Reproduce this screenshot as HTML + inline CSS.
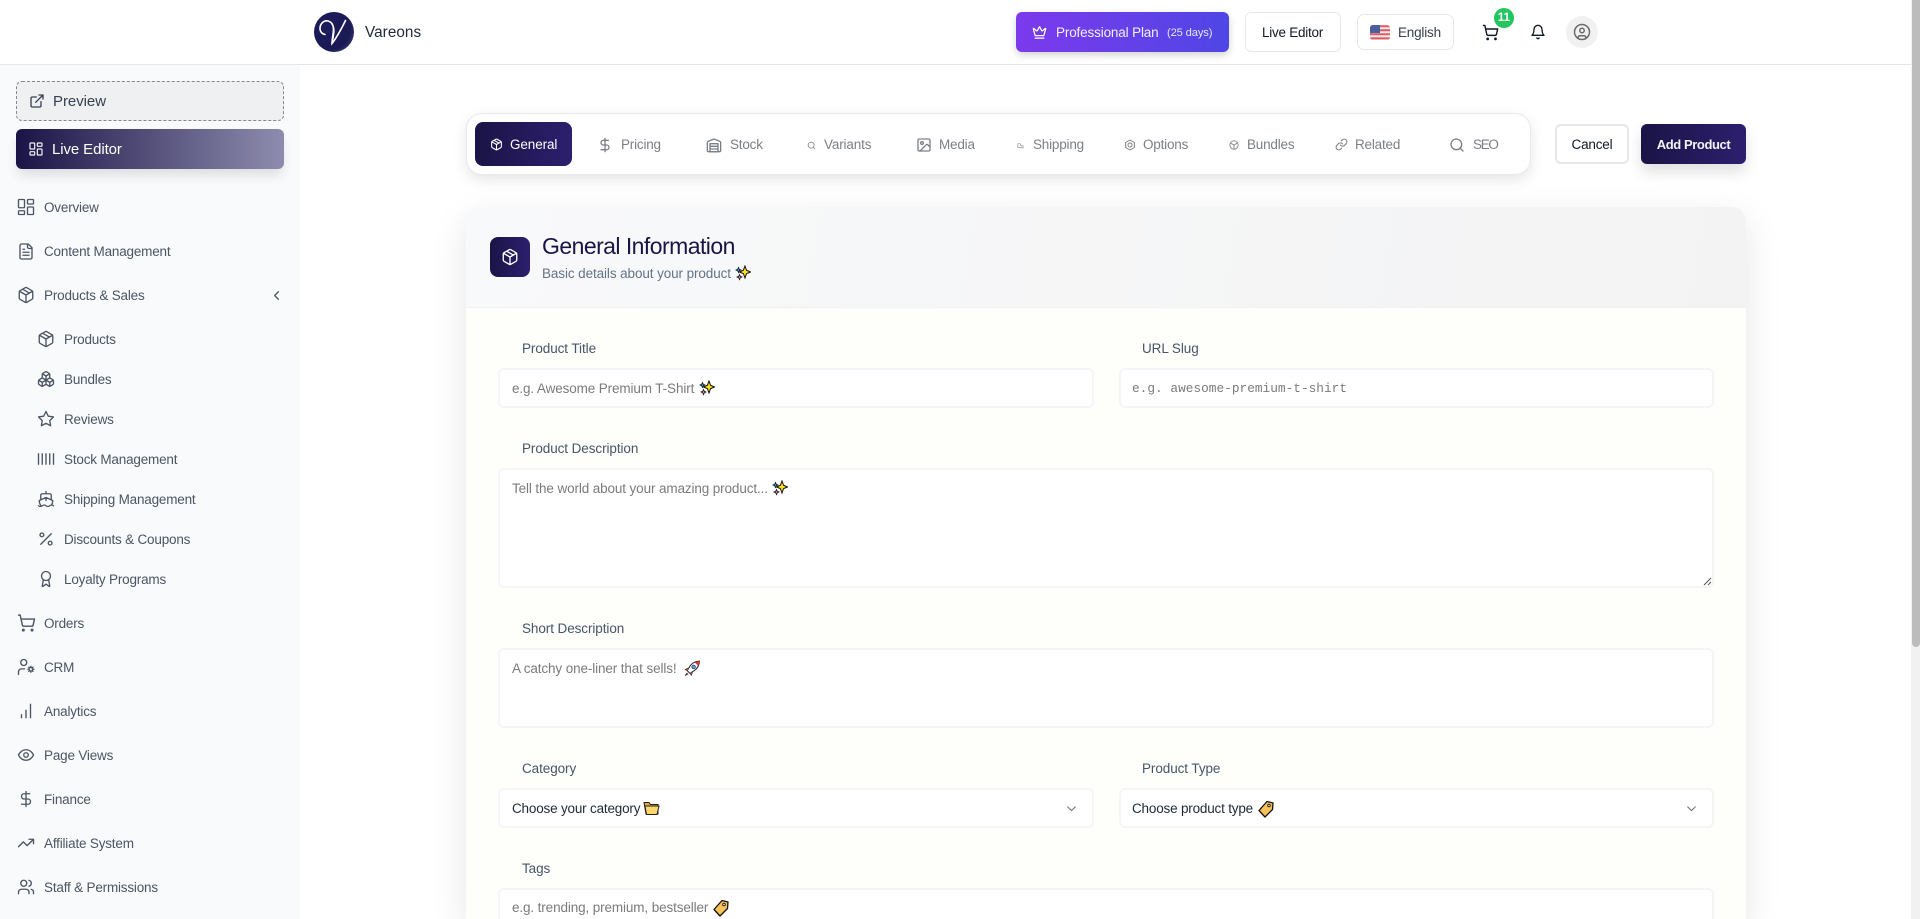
<!DOCTYPE html>
<html lang="en"><head><meta charset="utf-8"><title>Vareons</title>
<style>
*{box-sizing:border-box}
html,body{margin:0;padding:0;width:1920px;height:919px;overflow:hidden;background:#fff;font-family:"Liberation Sans","DejaVu Sans",sans-serif}
#w{position:absolute;left:0;top:0;width:1920px;height:919px;overflow:hidden;background:#fff}
.a{position:absolute}
.t{position:absolute;height:20px;line-height:20px;white-space:nowrap;font-size:13.5px;letter-spacing:-.19px;margin-top:1px}
.n{color:#4b5563}
.tab{color:#7b7f87;font-size:13.5px;letter-spacing:-.2px}
.lab{color:#475569;font-size:13.5px;letter-spacing:-.08px}
.ph{color:#7b7b7b;font-size:13.5px;letter-spacing:-.12px}
.box{position:absolute;background:#fff;border:2px solid #f4f5f9;border-radius:6px}
svg.i{position:absolute;fill:none;stroke:currentColor;stroke-linecap:round;stroke-linejoin:round;overflow:visible}
svg.e{position:absolute;overflow:visible}
.s{color:#4b5563;stroke-width:1.8}
.g{color:#7b7f87;stroke-width:2;margin-top:1px}
</style></head><body><div id="w">
<svg width="0" height="0" style="position:absolute"><defs>
<symbol id="pkg" viewBox="0 0 24 24"><path d="M7.5 4.27l9 5.15M21 8a2 2 0 0 0-1-1.73l-7-4a2 2 0 0 0-2 0l-7 4A2 2 0 0 0 3 8v8a2 2 0 0 0 1 1.73l7 4a2 2 0 0 0 2 0l7-4A2 2 0 0 0 21 16ZM3.3 7l8.7 5 8.7-5M12 22V12"/></symbol>
<symbol id="spark" viewBox="0 0 16 16"><path d="M10 1l1.5 4.2L15.5 7l-4 1.6L10 13 8.4 8.6 4.5 7l3.9-1.8Z" fill="#ffe11a" stroke="#111" stroke-width="1"/><path d="M3.5 2.5l.8 1.7 1.7.8-1.7.8-.8 1.7-.8-1.7L1 5l1.700-.8Z" fill="#2aa7d8" stroke="#111" stroke-width=".8"/><path d="M4.500 9.500l.8 1.800 1.700.7-1.700.8-.8 1.800-.8-1.800L2 12l1.700-.7Z" fill="#f48fb1" stroke="#111" stroke-width=".8"/></symbol>
<symbol id="lab" viewBox="0 0 18 18"><path d="M10 1.500l6 1.500-.5 6.500L8 17 2 10.500Z" fill="#fbc25a" stroke="#111" stroke-width="1.300" stroke-linejoin="round"/><circle cx="12" cy="5.500" r="1.300" fill="#fff" stroke="#111" stroke-width=".9"/></symbol>
</defs></svg>

<!-- top bar -->
<div class="a" style="left:0;top:0;width:1920px;height:65px;background:#fff;border-bottom:1px solid #e5e7eb"></div>
<div class="a" style="left:314px;top:12px;width:40px;height:40px;border-radius:50%;background:radial-gradient(circle at 38% 42%,#1c1b5c 0,#1b1a55 62%,#55548a 100%)"></div>
<svg class="e" style="left:314px;top:12px" width="40" height="40" viewBox="0 0 40 40"><path d="M11 22.500C8 22 6 19.500 6 16.500 6 11.500 10 8 14 9c4.500 1.200 6 5 5.300 11-.4 4-1.300 8-1.300 11.500C22 26.500 28 16 31.500 8.500" fill="none" stroke="#fff" stroke-width="1.600" stroke-linecap="round"/><path d="M17.600 11.500c2 2.500 2.600 5.500 2.300 9-.3 3.500-1 7-1.900 10" fill="none" stroke="#fff" stroke-width="1.400"/></svg>
<div class="t" style="left:365px;top:22px;color:#1f2937;font-size:15.300px;letter-spacing:.05px">Vareons</div>

<div class="a" style="left:1016px;top:12px;width:213px;height:40px;border-radius:6px;background:linear-gradient(90deg,#7c3aed,#4f46e5);box-shadow:0 3px 8px rgba(0,0,0,.18)"></div>
<svg class="i" style="left:1032px;top:25px;color:#fff;stroke-width:2" width="15" height="15" viewBox="0 0 24 24"><path d="M11.562 3.266a.5.5 0 0 1 .876 0L15.39 8.87a1 1 0 0 0 1.516.294L21.183 5.5a.5.5 0 0 1 .798.519l-2.834 10.246a1 1 0 0 1-.956.734H5.81a1 1 0 0 1-.957-.734L2.02 6.02a.5.5 0 0 1 .798-.519l4.276 3.664a1 1 0 0 0 1.516-.294zM5 21h14"/></svg>
<div class="t" style="left:1056px;top:22px;color:#f3f0ff;font-size:13.500px;letter-spacing:-.15px">Professional Plan</div>
<div class="t" style="left:1167px;top:22px;color:#e6e3ff;font-size:11.200px;letter-spacing:-.15px">(25 days)</div>

<div class="a" style="left:1245px;top:12px;width:96px;height:40px;border-radius:6px;background:#fff;border:1px solid #e5e7eb"></div>
<div class="t" style="left:1262px;top:22px;color:#111827;font-size:13.500px;letter-spacing:-.25px">Live Editor</div>
<div class="a" style="left:1357px;top:14px;width:97px;height:36px;border-radius:7px;background:#fff;border:1px solid #e5e7eb"></div>
<svg class="e" style="left:1370px;top:25px" width="20" height="15" viewBox="0 0 20 15"><defs><clipPath id="fl"><rect width="20" height="15" rx="3"/></clipPath></defs><g clip-path="url(#fl)"><rect width="20" height="15" fill="#f3e9ea"/><path d="M0 1.200h20M0 5.200h20M0 9.200h20M0 13.400h20" stroke="#de5b64" stroke-width="2"/><rect width="10" height="8" fill="#48609f"/></g></svg>
<div class="t" style="left:1398px;top:22px;color:#374151;font-size:13.500px;letter-spacing:-.2px">English</div>

<svg class="i" style="left:1482px;top:24px;color:#111827;stroke-width:2" width="17" height="17" viewBox="0 0 24 24"><circle cx="8" cy="21" r="1"/><circle cx="19" cy="21" r="1"/><path d="M2.050 2.050h2l2.660 12.420a2 2 0 0 0 2 1.580h9.780a2 2 0 0 0 1.950-1.570l1.650-7.430H5.120"/></svg>
<div class="a" style="left:1494px;top:8px;width:20px;height:20px;border-radius:50%;background:#22c55e"></div>
<div class="t" style="left:1494px;top:7px;width:20px;text-align:center;color:#fff;font-size:11.500px;font-weight:bold;letter-spacing:0">11</div>
<svg class="i" style="left:1530px;top:24px;color:#111827;stroke-width:2" width="16" height="16" viewBox="0 0 24 24"><path d="M6 8a6 6 0 0 1 12 0c0 7 3 9 3 9H3s3-2 3-9M10.300 21a1.940 1.940 0 0 0 3.400 0"/></svg>
<div class="a" style="left:1566px;top:16px;width:32px;height:32px;border-radius:50%;background:#f1f1f1"></div>
<svg class="i" style="left:1573px;top:23px;color:#6b6b6b;stroke-width:2" width="18" height="18" viewBox="0 0 24 24"><circle cx="12" cy="12" r="10"/><circle cx="12" cy="10" r="3"/><path d="M7 20.662V19a2 2 0 0 1 2-2h6a2 2 0 0 1 2 2v1.662"/></svg>

<!-- sidebar -->
<div class="a" style="left:0;top:65px;width:300px;height:854px;background:#f9fafc"></div>
<div class="a" style="left:16px;top:81px;width:268px;height:40px;border-radius:6px;background:#eef0f2;border:1px dashed #888"></div>
<svg class="i" style="left:29px;top:93px;color:#374151;stroke-width:2" width="16" height="16" viewBox="0 0 24 24"><path d="M15 3h6v6M10 14 21 3M18 13v6a2 2 0 0 1-2 2H5a2 2 0 0 1-2-2V8a2 2 0 0 1 2-2h6"/></svg>
<div class="t" style="left:53px;top:91px;color:#374151;font-size:15px;letter-spacing:-.05px">Preview</div>
<div class="a" style="left:16px;top:129px;width:268px;height:40px;border-radius:6px;background:linear-gradient(90deg,#1a1446,#8e8cae);box-shadow:0 8px 12px -2px rgba(0,0,0,.12)"></div>
<svg class="i" style="left:28px;top:141px;color:#f1f1f5;stroke-width:1.800" width="16" height="16" viewBox="0 0 24 24"><rect x="3" y="3" width="7" height="9" rx="1"/><rect x="14" y="3" width="7" height="5" rx="1"/><rect x="14" y="12" width="7" height="9" rx="1"/><rect x="3" y="16" width="7" height="5" rx="1"/></svg>
<div class="t" style="left:52px;top:139px;color:#fff;font-size:15px;letter-spacing:-.1px">Live Editor</div>

<svg class="i s" style="left:17px;top:198px" width="18" height="18" viewBox="0 0 24 24"><rect x="2" y="2" width="8" height="11" rx="1"/><rect x="14" y="2" width="8" height="6" rx="1"/><rect x="14" y="12" width="8" height="10" rx="1"/><rect x="2" y="17" width="8" height="5" rx="1"/></svg>
<div class="t n" style="left:44px;top:197px">Overview</div>
<svg class="i s" style="left:17px;top:242px" width="18" height="19" viewBox="0 0 24 24"><path d="M15 2H6a2 2 0 0 0-2 2v16a2 2 0 0 0 2 2h12a2 2 0 0 0 2-2V7ZM14 2v4a2 2 0 0 0 2 2h4M10 9H8M16 13H8M16 17H8"/></svg>
<div class="t n" style="left:44px;top:241px">Content Management</div>
<svg class="i s" style="left:17px;top:286px" width="18" height="18"><use href="#pkg"/></svg>
<div class="t n" style="left:44px;top:285px">Products &amp; Sales</div>
<svg class="i" style="left:269px;top:288px;color:#4b5563;stroke-width:2" width="15" height="15" viewBox="0 0 24 24"><path d="m15 18-6-6 6-6"/></svg>

<svg class="i s" style="left:37px;top:330px" width="18" height="18"><use href="#pkg"/></svg>
<div class="t n" style="left:64px;top:329px">Products</div>
<svg class="i s" style="left:37px;top:370px" width="18" height="18" viewBox="0 0 24 24"><path d="M2.970 12.920A2 2 0 0 0 2 14.630v3.240a2 2 0 0 0 .97 1.710l3 1.800a2 2 0 0 0 2.060 0L12 19v-5.500l-5-3-4.030 2.420ZM7 16.500l-4.740-2.850M7 16.500l5-3M7 16.500v5.170M12 13.500V19l3.970 2.380a2 2 0 0 0 2.060 0l3-1.800a2 2 0 0 0 .97-1.710v-3.240a2 2 0 0 0-.97-1.710L17 10.500l-5 3ZM17 16.500l-5-3M17 16.500l4.740-2.850M17 16.500v5.170M7.970 4.420A2 2 0 0 0 7 6.130v4.370l5 3 5-3V6.130a2 2 0 0 0-.97-1.710l-3-1.800a2 2 0 0 0-2.060 0l-3 1.800ZM12 8 7.260 5.150M12 8l4.740-2.850M12 13.500V8"/></svg>
<div class="t n" style="left:64px;top:369px">Bundles</div>
<svg class="i s" style="left:37px;top:410px" width="18" height="18" viewBox="0 0 24 24"><polygon points="12 2 15.090 8.260 22 9.270 17 14.140 18.180 21.020 12 17.770 5.820 21.020 7 14.140 2 9.270 8.910 8.260 12 2"/></svg>
<div class="t n" style="left:64px;top:409px">Reviews</div>
<svg class="i s" style="left:37px;top:450px" width="18" height="18" viewBox="0 0 24 24"><path d="M2 5v14M7 5v14M12 5v14M17 5v14M22 5v14"/></svg>
<div class="t n" style="left:64px;top:449px">Stock Management</div>
<svg class="i s" style="left:37px;top:490px" width="18" height="18" viewBox="0 0 24 24"><path d="M2 21c.6.5 1.200 1 2.500 1 2.500 0 2.500-2 5-2 1.300 0 1.900.5 2.500 1 .6.5 1.200 1 2.500 1 2.500 0 2.500-2 5-2 1.300 0 1.900.5 2.500 1M19.380 20A11.600 11.600 0 0 0 21 14l-9-4-9 4c0 2.900.94 5.340 2.810 7.760M19 13V7a2 2 0 0 0-2-2H7a2 2 0 0 0-2 2v6M12 10v4M12 2v3"/></svg>
<div class="t n" style="left:64px;top:489px">Shipping Management</div>
<svg class="i s" style="left:37px;top:530px" width="18" height="18" viewBox="0 0 24 24"><path d="M19 5 5 19"/><circle cx="6.500" cy="6.500" r="2.500"/><circle cx="17.500" cy="17.500" r="2.500"/></svg>
<div class="t n" style="left:64px;top:529px">Discounts &amp; Coupons</div>
<svg class="i s" style="left:37px;top:570px" width="18" height="18" viewBox="0 0 24 24"><path d="m15.477 12.890 1.515 8.526a.5.5 0 0 1-.81.47l-3.580-2.687a1 1 0 0 0-1.197 0l-3.586 2.686a.5.5 0 0 1-.81-.469l1.514-8.526"/><circle cx="12" cy="8" r="6"/></svg>
<div class="t n" style="left:64px;top:569px">Loyalty Programs</div>

<svg class="i s" style="left:17px;top:613px" width="19" height="20" viewBox="0 0 24 24"><circle cx="8" cy="21" r="1"/><circle cx="19" cy="21" r="1"/><path d="M2.050 2.050h2l2.660 12.420a2 2 0 0 0 2 1.580h9.780a2 2 0 0 0 1.950-1.570l1.650-7.430H5.120"/></svg>
<div class="t n" style="left:44px;top:613px">Orders</div>
<svg class="i s" style="left:17px;top:658px" width="18" height="18" viewBox="0 0 24 24"><circle cx="9" cy="6" r="4"/><path d="M10 14.500H6a4 4 0 0 0-4 4V22"/><circle cx="18.500" cy="15" r="2.400"/><path d="M18.500 11v1M18.500 18v1M22.500 15h-1M15.500 15h-1M21.300 12.200l-.7.7M16.400 17.100l-.7.7M21.300 17.800l-.7-.7M16.400 12.900l-.7-.7"/></svg>
<div class="t n" style="left:44px;top:657px">CRM</div>
<svg class="i s" style="left:17px;top:702px" width="18" height="18" viewBox="0 0 24 24"><path d="M6 21v-4M12 21V11M18 21V3"/></svg>
<div class="t n" style="left:44px;top:701px">Analytics</div>
<svg class="i s" style="left:17px;top:746px" width="18" height="18" viewBox="0 0 24 24"><path d="M2 12s3-7 10-7 10 7 10 7-3 7-10 7-10-7-10-7Z"/><circle cx="12" cy="12" r="3"/></svg>
<div class="t n" style="left:44px;top:745px">Page Views</div>
<svg class="i s" style="left:17px;top:789px" width="18" height="20" viewBox="0 0 24 24"><path d="M12 2v20M17 5H9.500a3.500 3.500 0 0 0 0 7h5a3.500 3.500 0 0 1 0 7H6"/></svg>
<div class="t n" style="left:44px;top:789px">Finance</div>
<svg class="i s" style="left:17px;top:834px" width="18" height="18" viewBox="0 0 24 24"><path d="m22 7-8.500 8.500-5-5L2 17M16 7h6v6"/></svg>
<div class="t n" style="left:44px;top:833px">Affiliate System</div>
<svg class="i s" style="left:17px;top:878px" width="18" height="18" viewBox="0 0 24 24"><path d="M16 21v-2a4 4 0 0 0-4-4H6a4 4 0 0 0-4 4v2M22 21v-2a4 4 0 0 0-3-3.870M16 3.130a4 4 0 0 1 0 7.750"/><circle cx="9" cy="7" r="4"/></svg>
<div class="t n" style="left:44px;top:877px">Staff &amp; Permissions</div>

<!-- tabs -->
<div class="a" style="left:466px;top:113px;width:1065px;height:62px;background:#fff;border:1px solid #e9eaec;border-radius:16px;box-shadow:0 5px 14px rgba(0,0,0,.1)"></div>
<div class="a" style="left:475px;top:122px;width:97px;height:44px;border-radius:8px;background:linear-gradient(90deg,#1a1446,#2d1f6e)"></div>
<svg class="i" style="left:490px;top:138px;color:#fff;stroke-width:2" width="13" height="13"><use href="#pkg"/></svg>
<div class="t" style="left:510px;top:134px;color:#fff;font-size:13.500px;letter-spacing:-.1px;font-weight:500">General</div>

<svg class="i g" style="left:597px;top:136px" width="16" height="16" viewBox="0 0 24 24"><path d="M12 2v20M17 5H9.500a3.500 3.500 0 0 0 0 7h5a3.500 3.500 0 0 1 0 7H6"/></svg>
<div class="t tab" style="left:621px;top:134px">Pricing</div>
<svg class="i g" style="left:706px;top:136px" width="16" height="16" viewBox="0 0 24 24"><path d="M22 8.350V20a2 2 0 0 1-2 2H4a2 2 0 0 1-2-2V8.350A2 2 0 0 1 3.260 6.500l8-3.200a2 2 0 0 1 1.480 0l8 3.200A2 2 0 0 1 22 8.350ZM6 18h12M6 14h12"/><rect x="6" y="10" width="12" height="12"/></svg>
<div class="t tab" style="left:730px;top:134px">Stock</div>
<svg class="i g" style="left:807px;top:140px" width="9" height="9" viewBox="0 0 24 24"><circle cx="11" cy="11" r="8"/><path d="m21 21-4.300-4.300"/></svg>
<div class="t tab" style="left:824px;top:134px;letter-spacing:-.15px">Variants</div>
<svg class="i g" style="left:916px;top:136px" width="16" height="16" viewBox="0 0 24 24"><rect x="3" y="3" width="18" height="18" rx="2"/><circle cx="9" cy="9" r="2"/><path d="m21 15-3.086-3.086a2 2 0 0 0-2.828 0L6 21"/></svg>
<div class="t tab" style="left:939px;top:134px">Media</div>
<svg class="i g" style="left:1017px;top:141px" width="7" height="7" viewBox="0 0 24 24"><path d="M3 20V6h8l3 7h7v7Z"/></svg>
<div class="t tab" style="left:1033px;top:134px">Shipping</div>
<svg class="i g" style="left:1124px;top:138px" width="12" height="12" viewBox="0 0 24 24"><path d="M12 2l8.700 5v10L12 22l-8.700-5V7Z"/><circle cx="12" cy="12" r="4"/></svg>
<div class="t tab" style="left:1143px;top:134px">Options</div>
<svg class="i g" style="left:1229px;top:139px" width="10" height="10" viewBox="0 0 24 24"><circle cx="12" cy="12" r="10"/><path d="M5 8l7 4 7-4M12 12v9"/></svg>
<div class="t tab" style="left:1247px;top:134px">Bundles</div>
<svg class="i g" style="left:1335px;top:137px" width="13" height="13" viewBox="0 0 24 24"><path d="M10 13a5 5 0 0 0 7.540.54l3-3a5 5 0 0 0-7.070-7.070l-1.720 1.710M14 11a5 5 0 0 0-7.540-.54l-3 3a5 5 0 0 0 7.070 7.070l1.710-1.710"/></svg>
<div class="t tab" style="left:1355px;top:134px">Related</div>
<svg class="i g" style="left:1449px;top:136px" width="16" height="16" viewBox="0 0 24 24"><circle cx="11" cy="11" r="8"/><path d="m21 21-4.300-4.300"/></svg>
<div class="t tab" style="left:1473px;top:134px;letter-spacing:-1.300px">SEO</div>

<div class="a" style="left:1555px;top:124px;width:74px;height:40px;border-radius:6px;background:#fff;border:2px solid #e5e7eb"></div>
<div class="t" style="left:1555px;top:134px;width:74px;text-align:center;color:#111827;font-weight:500">Cancel</div>
<div class="a" style="left:1641px;top:124px;width:105px;height:40px;border-radius:6px;background:linear-gradient(90deg,#1a1446,#2d1f6e);box-shadow:0 8px 14px rgba(0,0,0,.12)"></div>
<div class="t" style="left:1641px;top:134px;width:105px;text-align:center;color:#f3f3f8;font-weight:bold;font-size:13px;letter-spacing:-.4px">Add Product</div>

<!-- card -->
<div class="a" style="left:466px;top:207px;width:1280px;height:712px;background:#fefefa;border-radius:14px 14px 0 0;box-shadow:0 12px 36px rgba(0,0,0,.1)"></div>
<div class="a" style="left:466px;top:207px;width:1280px;height:101px;background:linear-gradient(100deg,#f8f9fa,#f3f3f4);border-radius:14px 14px 0 0;border-bottom:1px solid #f0f1f5"></div>
<div class="a" style="left:490px;top:237px;width:40px;height:40px;border-radius:8px;background:linear-gradient(90deg,#1a1446,#2d1f6e)"></div>
<svg class="i" style="left:501px;top:248px;color:#fff;stroke-width:1.800" width="18" height="18"><use href="#pkg"/></svg>
<div class="t" style="left:542px;top:233px;color:#1a1446;font-size:23px;height:24px;line-height:24px;letter-spacing:-.55px">General Information</div>
<div class="t" style="left:542px;top:263px;color:#64748b;font-size:13.500px;letter-spacing:-.1px">Basic details about your product</div>
<svg class="e" style="left:735px;top:265px" width="16" height="16"><use href="#spark"/></svg>

<div class="t lab" style="left:522px;top:338px">Product Title</div>
<div class="box" style="left:498px;top:368px;width:596px;height:40px"></div>
<div class="t ph" style="left:512px;top:378px">e.g. Awesome Premium T-Shirt</div>
<svg class="e" style="left:699px;top:380px" width="16" height="16"><use href="#spark"/></svg>

<div class="t lab" style="left:1142px;top:338px">URL Slug</div>
<div class="box" style="left:1119px;top:368px;width:595px;height:40px"></div>
<div class="t ph" style="left:1132px;top:378px;font-family:'Liberation Mono',monospace;font-size:12.800px;letter-spacing:0">e.g. awesome-premium-t-shirt</div>

<div class="t lab" style="left:522px;top:438px">Product Description</div>
<div class="box" style="left:498px;top:468px;width:1216px;height:120px"></div>
<div class="t ph" style="left:512px;top:478px">Tell the world about your amazing product...</div>
<svg class="e" style="left:772px;top:480px" width="16" height="16"><use href="#spark"/></svg>
<svg class="e" style="left:1703px;top:577px" width="9" height="9"><path d="M1 8 8 1M5 8l3-3" stroke="#555" stroke-width="1"/></svg>

<div class="t lab" style="left:522px;top:618px">Short Description</div>
<div class="box" style="left:498px;top:648px;width:1216px;height:80px"></div>
<div class="t ph" style="left:512px;top:658px">A catchy one-liner that sells!</div>
<svg class="e" style="left:683px;top:660px" width="18" height="17" viewBox="0 0 16 16"><path d="M15 1c-4.500.3-8 2.500-10 6.500L3.500 10 6 12.500l2.500-1.500c4-2 6.200-5.500 6.500-10Z" fill="#fff" stroke="#223" stroke-width=".9"/><path d="M15 1c-1.600.1-3 .6-4.300 1.300l3 3C14.400 4 14.900 2.600 15 1Z" fill="#d83a2b"/><circle cx="9.500" cy="6.500" r="1.700" fill="#4aa8e8" stroke="#223" stroke-width=".6"/><path d="M4.500 7.500 1.500 9l2.500 1.200M8.500 11.500l-1.200 3-1.300-2.500M3.500 12l-2 2.700L4.500 13" fill="#e8612c" stroke="#223" stroke-width=".6"/></svg>

<div class="t lab" style="left:522px;top:758px">Category</div>
<div class="box" style="left:498px;top:788px;width:596px;height:40px"></div>
<div class="t" style="left:512px;top:798px;color:#1f2937">Choose your category</div>
<svg class="e" style="left:643px;top:801px" width="17" height="15" viewBox="0 0 17 15"><path d="M1 1.500h5l1.500 2H15V13H3Z" fill="#e8a93a" stroke="#222" stroke-width="1"/><path d="M2 5h14l-2 8.500H3.500Z" fill="#fdd76c" stroke="#222" stroke-width="1"/></svg>
<svg class="i" style="left:1065px;top:802px;color:#6b7280;stroke-width:2" width="13" height="13" viewBox="0 0 24 24"><path d="m5 9 7 7 7-7"/></svg>

<div class="t lab" style="left:1142px;top:758px">Product Type</div>
<div class="box" style="left:1119px;top:788px;width:595px;height:40px"></div>
<div class="t" style="left:1132px;top:798px;color:#1f2937">Choose product type</div>
<svg class="e" style="left:1257px;top:800px" width="18" height="18"><use href="#lab"/></svg>
<svg class="i" style="left:1685px;top:802px;color:#6b7280;stroke-width:2" width="13" height="13" viewBox="0 0 24 24"><path d="m5 9 7 7 7-7"/></svg>

<div class="t lab" style="left:522px;top:858px">Tags</div>
<div class="box" style="left:498px;top:888px;width:1216px;height:31px;border-bottom:0;border-radius:6px 6px 0 0"></div>
<div class="t ph" style="left:512px;top:897px">e.g. trending, premium, bestseller</div>
<svg class="e" style="left:712px;top:899px" width="18" height="18"><use href="#lab"/></svg>

<!-- scrollbar -->
<div class="a" style="left:1911px;top:0;width:9px;height:919px;background:#f1f1f1"></div>
<div class="a" style="left:1912px;top:0;width:8px;height:647px;background:#bcbcbc;border-radius:0 0 4px 4px"></div>
</div></body></html>
